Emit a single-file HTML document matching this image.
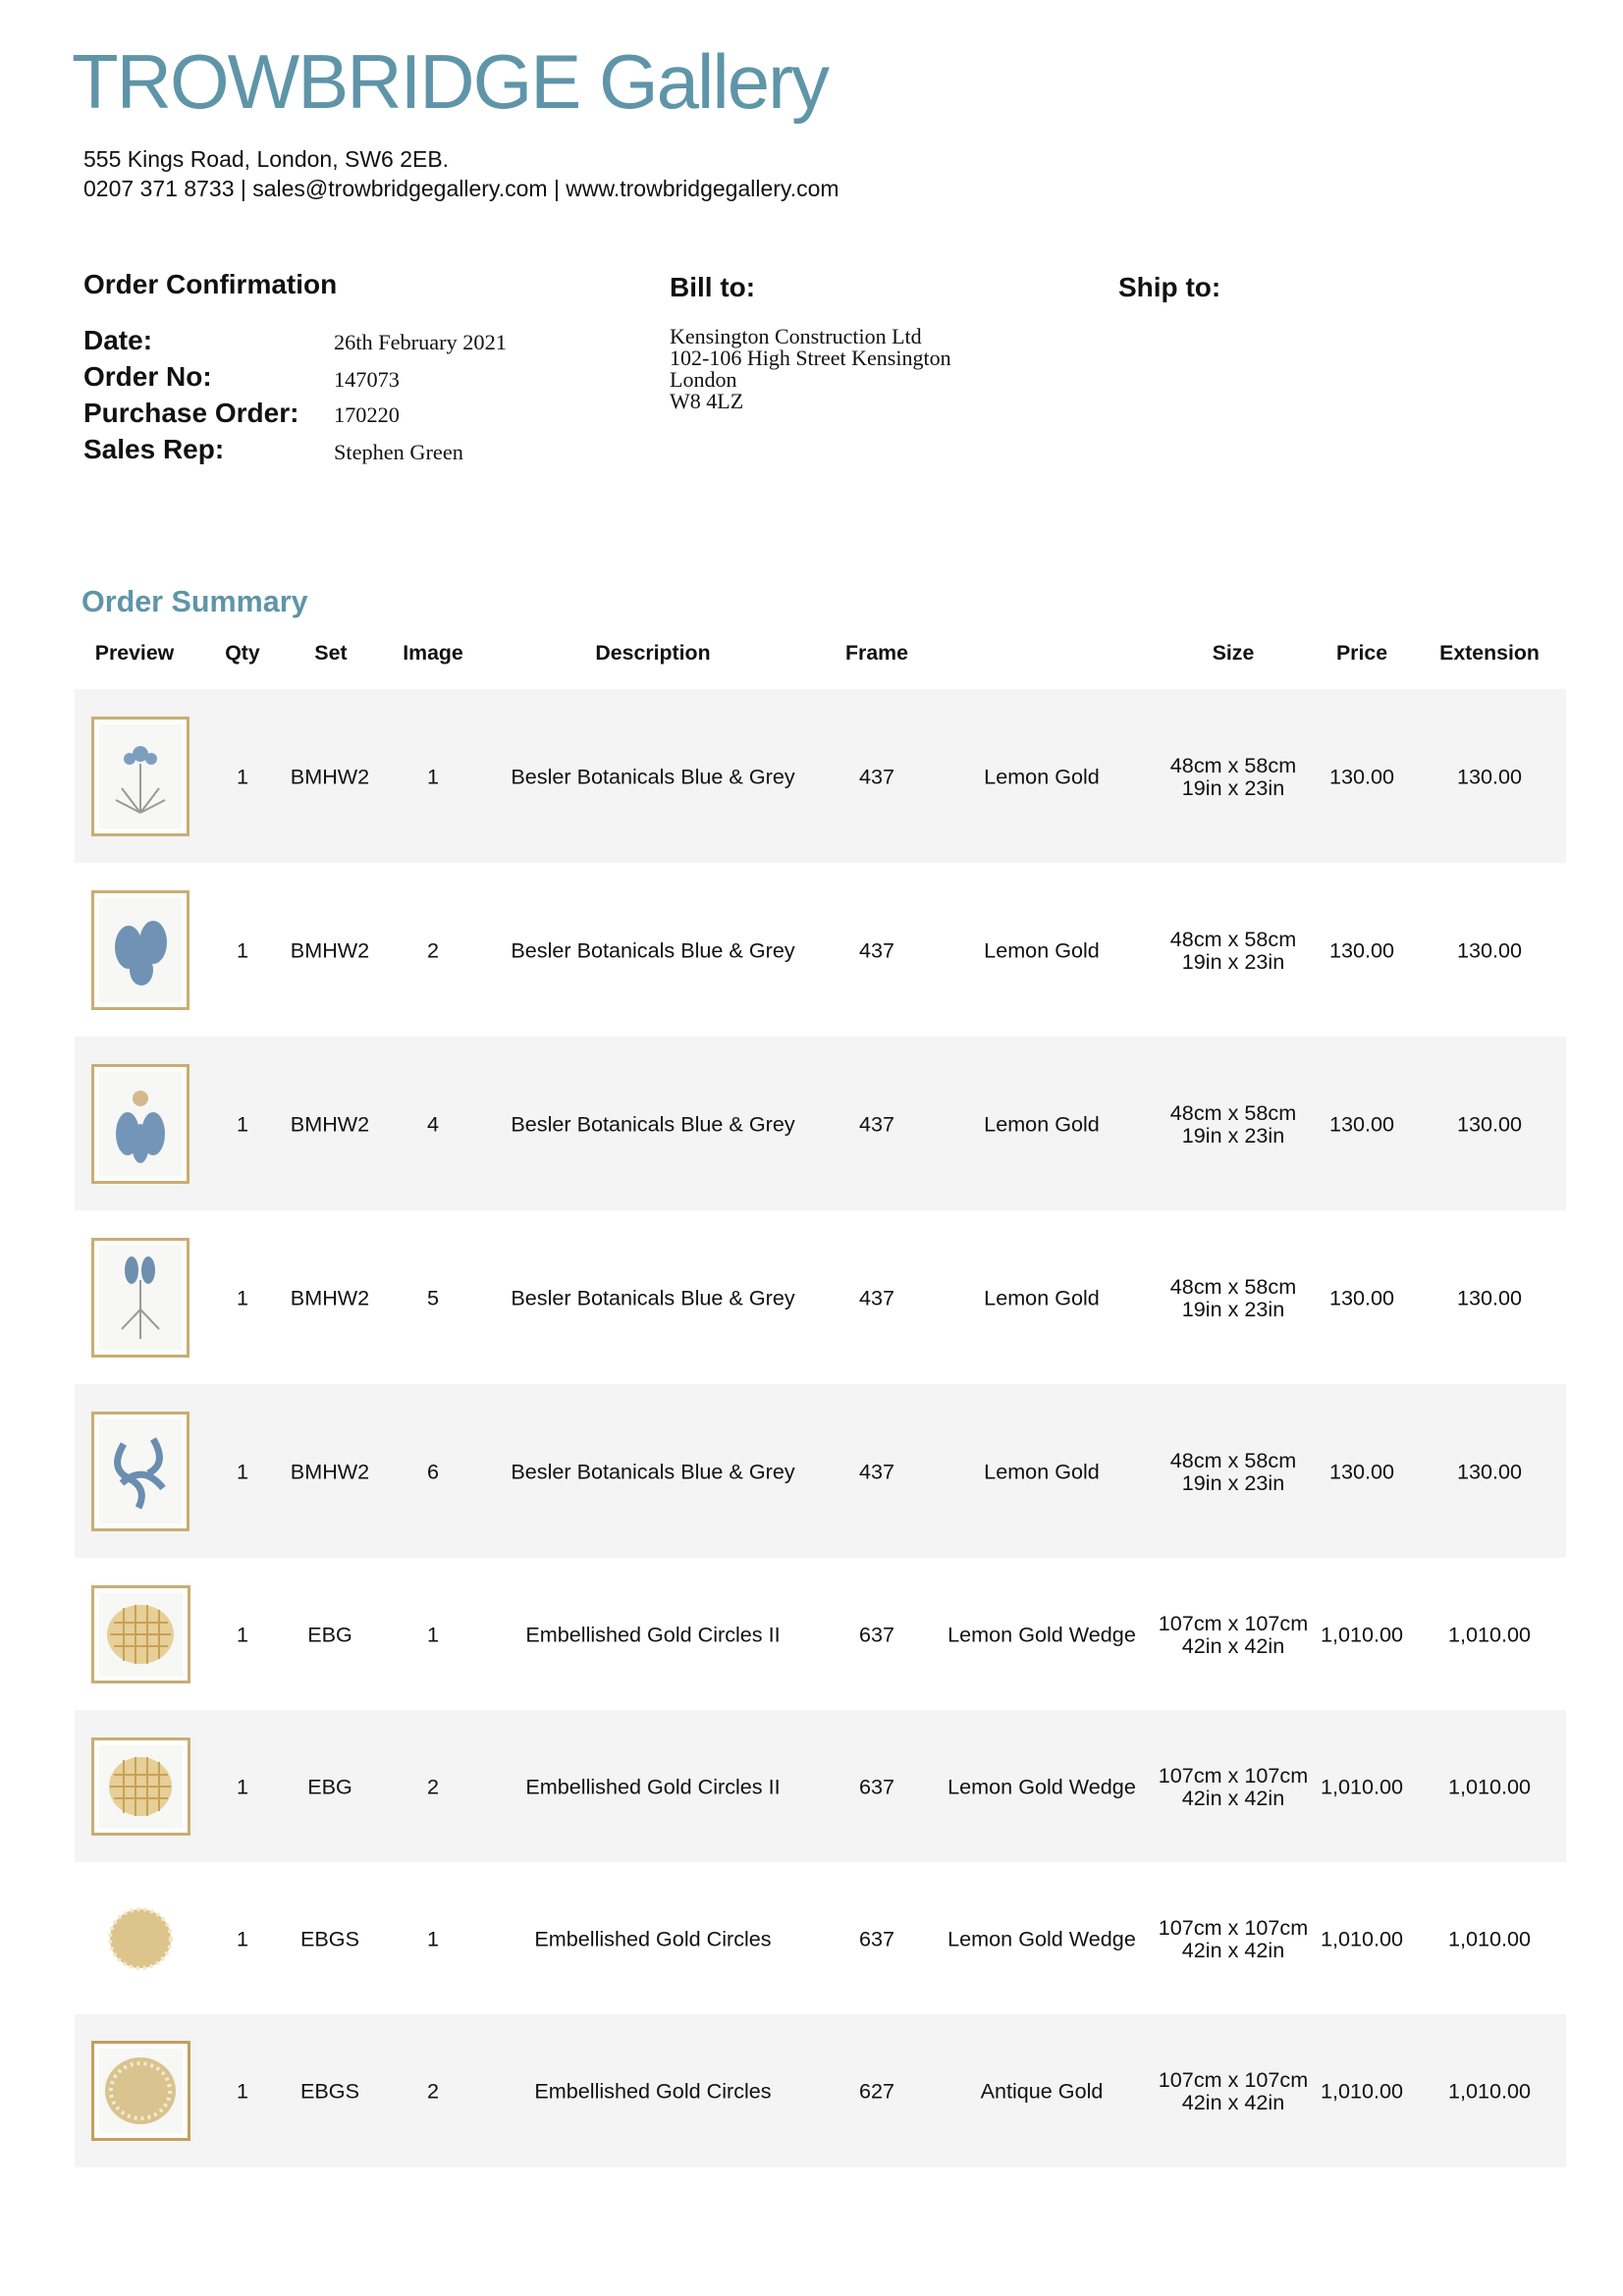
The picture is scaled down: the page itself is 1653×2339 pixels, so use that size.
<!DOCTYPE html>
<html><head><meta charset="utf-8"><style>
*{margin:0;padding:0;box-sizing:border-box}
body{width:1653px;height:2339px;background:#fff;position:relative;font-family:"Liberation Sans",Arial,sans-serif;color:#111;overflow:hidden}
.a{position:absolute;white-space:nowrap}
.title{left:73px;top:44px;font-size:78px;color:#5f95a8;letter-spacing:-2px;line-height:1}
.addr{left:85px;font-size:23px;line-height:1}
.lbl{left:85px;font-size:28px;font-weight:bold;line-height:1}
.val{left:340px;font-family:"Liberation Serif",serif;font-size:22.3px;line-height:1}
.bill{left:682px;font-family:"Liberation Serif",serif;font-size:22px;line-height:22px}
.hd{top:653px;font-size:21.3px;font-weight:bold;transform:translateX(-50%)}
.row{position:absolute;left:76px;width:1519px}
.g{background:#f4f4f4}
.c{position:absolute;top:50%;transform:translate(-50%,-50%);font-size:21.6px;text-align:center;line-height:23px;white-space:nowrap}
.th{position:absolute;left:17px;top:50%;transform:translateY(-50%);width:100px;border:3px solid #c9ad74;background:#f7f7f5;box-shadow:inset 0 0 0 5px #fdfdfb}
</style></head><body>
<div class="a title">TROWBRIDGE Gallery</div>
<div class="a addr" style="top:151px">555 Kings Road, London, SW6 2EB.</div>
<div class="a addr" style="top:181px">0207 371 8733 | sales@trowbridgegallery.com | www.trowbridgegallery.com</div>

<div class="a lbl" style="top:276px">Order Confirmation</div>
<div class="a lbl" style="top:333px">Date:</div>
<div class="a lbl" style="top:370px">Order No:</div>
<div class="a lbl" style="top:407px">Purchase Order:</div>
<div class="a lbl" style="top:444px">Sales Rep:</div>
<div class="a val" style="top:338px">26th February 2021</div>
<div class="a val" style="top:376px">147073</div>
<div class="a val" style="top:412px">170220</div>
<div class="a val" style="top:450px">Stephen Green</div>

<div class="a lbl" style="left:682px;top:279px">Bill to:</div>
<div class="a lbl" style="left:1139px;top:279px">Ship to:</div>
<div class="a bill" style="top:332px">Kensington Construction Ltd<br>102-106 High Street Kensington<br>London<br>W8 4LZ</div>

<div class="a" style="left:83px;top:596px;font-size:30.5px;font-weight:bold;color:#5f95a8">Order Summary</div>

<div class="a hd" style="left:137px">Preview</div>
<div class="a hd" style="left:247px">Qty</div>
<div class="a hd" style="left:337px">Set</div>
<div class="a hd" style="left:441px">Image</div>
<div class="a hd" style="left:665px">Description</div>
<div class="a hd" style="left:893px">Frame</div>
<div class="a hd" style="left:1256px">Size</div>
<div class="a hd" style="left:1387px">Price</div>
<div class="a hd" style="left:1517px">Extension</div>

<div class="row g" style="top:702px;height:177px">
 <div class="th" style="height:122px"><svg width="94" height="116"><g fill="#7d9fbf"><circle cx="47" cy="35" r="8"/><circle cx="36" cy="40" r="6"/><circle cx="58" cy="40" r="6"/></g><g stroke="#999" fill="none" stroke-width="2"><path d="M47 45V95M47 95L28 70M47 95L66 70M47 95L22 82M47 95L72 82"/></g></svg></div>
 <div class="c" style="left:171px">1</div><div class="c" style="left:260px">BMHW2</div><div class="c" style="left:365px">1</div><div class="c" style="left:589px">Besler Botanicals Blue &amp; Grey</div><div class="c" style="left:817px">437</div><div class="c" style="left:985px">Lemon Gold</div><div class="c" style="left:1180px">48cm x 58cm<br>19in x 23in</div><div class="c" style="left:1311px">130.00</div><div class="c" style="left:1441px">130.00</div>
</div>
<div class="row" style="top:879px;height:177px">
 <div class="th" style="height:122px"><svg width="94" height="116"><g fill="#6f92b5"><ellipse cx="35" cy="55" rx="14" ry="22"/><ellipse cx="60" cy="50" rx="14" ry="22"/><ellipse cx="48" cy="78" rx="12" ry="16"/></g></svg></div>
 <div class="c" style="left:171px">1</div><div class="c" style="left:260px">BMHW2</div><div class="c" style="left:365px">2</div><div class="c" style="left:589px">Besler Botanicals Blue &amp; Grey</div><div class="c" style="left:817px">437</div><div class="c" style="left:985px">Lemon Gold</div><div class="c" style="left:1180px">48cm x 58cm<br>19in x 23in</div><div class="c" style="left:1311px">130.00</div><div class="c" style="left:1441px">130.00</div>
</div>
<div class="row g" style="top:1056px;height:177px">
 <div class="th" style="height:122px"><svg width="94" height="116"><g fill="#7396b8"><ellipse cx="34" cy="68" rx="12" ry="22"/><ellipse cx="60" cy="68" rx="12" ry="22"/><ellipse cx="47" cy="78" rx="9" ry="20"/></g><circle cx="47" cy="32" r="8" fill="#d6b98a"/></svg></div>
 <div class="c" style="left:171px">1</div><div class="c" style="left:260px">BMHW2</div><div class="c" style="left:365px">4</div><div class="c" style="left:589px">Besler Botanicals Blue &amp; Grey</div><div class="c" style="left:817px">437</div><div class="c" style="left:985px">Lemon Gold</div><div class="c" style="left:1180px">48cm x 58cm<br>19in x 23in</div><div class="c" style="left:1311px">130.00</div><div class="c" style="left:1441px">130.00</div>
</div>
<div class="row" style="top:1233px;height:177px">
 <div class="th" style="height:122px"><svg width="94" height="116"><g fill="#6e8fb0"><ellipse cx="38" cy="30" rx="7" ry="14"/><ellipse cx="55" cy="30" rx="7" ry="14"/></g><g stroke="#999" fill="none" stroke-width="2"><path d="M47 40V100M47 70L28 90M47 70L66 90"/></g></svg></div>
 <div class="c" style="left:171px">1</div><div class="c" style="left:260px">BMHW2</div><div class="c" style="left:365px">5</div><div class="c" style="left:589px">Besler Botanicals Blue &amp; Grey</div><div class="c" style="left:817px">437</div><div class="c" style="left:985px">Lemon Gold</div><div class="c" style="left:1180px">48cm x 58cm<br>19in x 23in</div><div class="c" style="left:1311px">130.00</div><div class="c" style="left:1441px">130.00</div>
</div>
<div class="row g" style="top:1410px;height:177px">
 <div class="th" style="height:122px"><svg width="94" height="116"><g fill="none" stroke="#6a8db0" stroke-width="7"><path d="M30 30Q15 55 35 65Q55 75 45 95M60 25Q75 50 55 60M28 70Q50 50 70 75"/></g></svg></div>
 <div class="c" style="left:171px">1</div><div class="c" style="left:260px">BMHW2</div><div class="c" style="left:365px">6</div><div class="c" style="left:589px">Besler Botanicals Blue &amp; Grey</div><div class="c" style="left:817px">437</div><div class="c" style="left:985px">Lemon Gold</div><div class="c" style="left:1180px">48cm x 58cm<br>19in x 23in</div><div class="c" style="left:1311px">130.00</div><div class="c" style="left:1441px">130.00</div>
</div>

<div class="row" style="top:1587px;height:155px">
 <div class="th" style="height:100px;width:101px"><svg width="95" height="94"><ellipse cx="47" cy="47" rx="34" ry="30" fill="#e6cf98"/><g stroke="#c9a155" stroke-width="2"><path d="M20 35H75M16 47H78M20 59H75M30 20V74M42 17V77M54 17V77M66 22V72"/></g></svg></div>
 <div class="c" style="left:171px">1</div><div class="c" style="left:260px">EBG</div><div class="c" style="left:365px">1</div><div class="c" style="left:589px">Embellished Gold Circles II</div><div class="c" style="left:817px">637</div><div class="c" style="left:985px">Lemon Gold Wedge</div><div class="c" style="left:1180px">107cm x 107cm<br>42in x 42in</div><div class="c" style="left:1311px">1,010.00</div><div class="c" style="left:1441px">1,010.00</div>
</div>
<div class="row g" style="top:1742px;height:155px">
 <div class="th" style="height:100px;width:101px"><svg width="95" height="94"><ellipse cx="47" cy="47" rx="32" ry="30" fill="#e6cf98"/><g stroke="#c9a155" stroke-width="2"><path d="M20 35H75M16 47H78M20 59H75M30 20V74M42 17V77M54 17V77M66 22V72"/></g></svg></div>
 <div class="c" style="left:171px">1</div><div class="c" style="left:260px">EBG</div><div class="c" style="left:365px">2</div><div class="c" style="left:589px">Embellished Gold Circles II</div><div class="c" style="left:817px">637</div><div class="c" style="left:985px">Lemon Gold Wedge</div><div class="c" style="left:1180px">107cm x 107cm<br>42in x 42in</div><div class="c" style="left:1311px">1,010.00</div><div class="c" style="left:1441px">1,010.00</div>
</div>
<div class="row" style="top:1897px;height:155px">
 <div style="position:absolute;left:17px;top:50%;transform:translateY(-50%);width:100px;height:90px"><svg width="100" height="90"><ellipse cx="50" cy="45" rx="31" ry="30" fill="#dcc48c"/><ellipse cx="50" cy="45" rx="31" ry="30" fill="none" stroke="#f3e8cc" stroke-width="4" stroke-dasharray="3 4"/></svg></div>
 <div class="c" style="left:171px">1</div><div class="c" style="left:260px">EBGS</div><div class="c" style="left:365px">1</div><div class="c" style="left:589px">Embellished Gold Circles</div><div class="c" style="left:817px">637</div><div class="c" style="left:985px">Lemon Gold Wedge</div><div class="c" style="left:1180px">107cm x 107cm<br>42in x 42in</div><div class="c" style="left:1311px">1,010.00</div><div class="c" style="left:1441px">1,010.00</div>
</div>
<div class="row g" style="top:2052px;height:156px">
 <div class="th" style="height:102px;width:101px;border-color:#c2a060"><svg width="95" height="96"><ellipse cx="47" cy="48" rx="36" ry="34" fill="#d9c38e"/><ellipse cx="47" cy="48" rx="30" ry="28" fill="none" stroke="#f3ead2" stroke-width="4" stroke-dasharray="3 4"/></svg></div>
 <div class="c" style="left:171px">1</div><div class="c" style="left:260px">EBGS</div><div class="c" style="left:365px">2</div><div class="c" style="left:589px">Embellished Gold Circles</div><div class="c" style="left:817px">627</div><div class="c" style="left:985px">Antique Gold</div><div class="c" style="left:1180px">107cm x 107cm<br>42in x 42in</div><div class="c" style="left:1311px">1,010.00</div><div class="c" style="left:1441px">1,010.00</div>
</div>
</body></html>
